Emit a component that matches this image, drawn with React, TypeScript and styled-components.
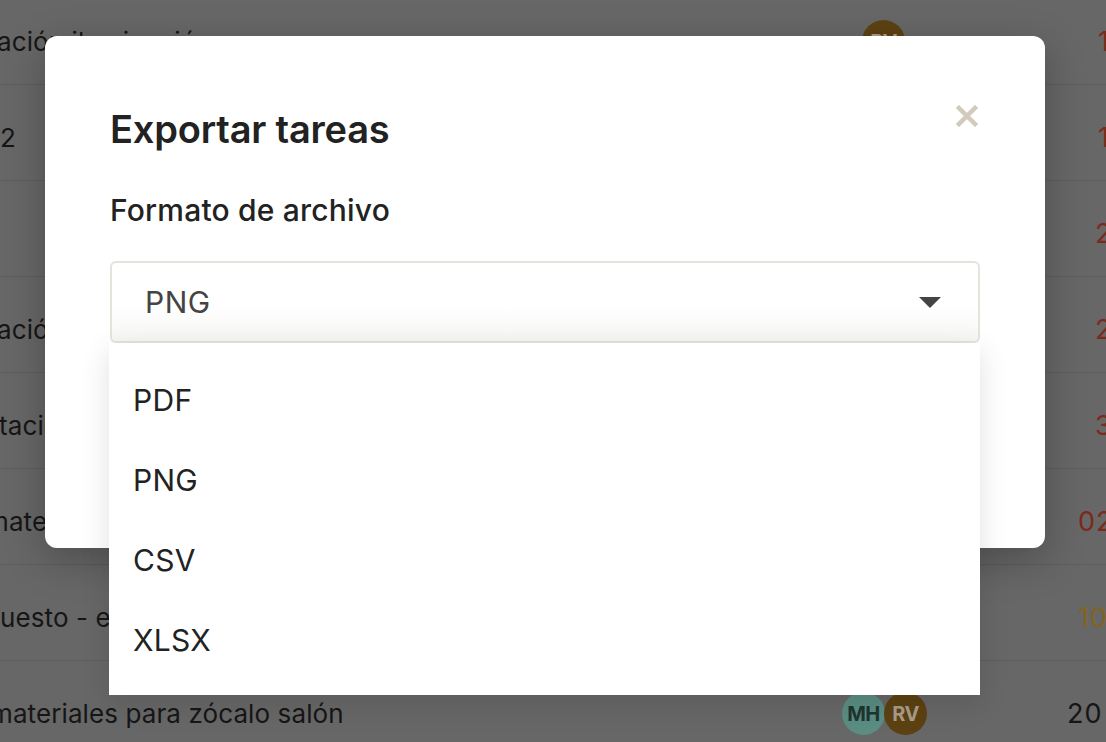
import { FC } from 'react';
import styled, { createGlobalStyle } from 'styled-components';

const GlobalStyle = createGlobalStyle`
  html, body {
    margin: 0;
    padding: 0;
  }
  body {
    font-family: Inter, 'Open Sans', sans-serif;
    background: #676767;
  }
`;

type Tone = 'red' | 'gold' | 'dark';

interface IRow {
  text: string;
  shift: number;
  date: string;
  dateX: number;
  tone: Tone;
  avatars?: { initials: string; kind: 'teal' | 'brown' }[];
  avatarX?: number;
}

const rows: IRow[] = [
  { text: 'ación iluminación', shift: -3, date: '12 jun', dateX: 1098, tone: 'red', avatars: [{ initials: 'RV', kind: 'brown' }], avatarX: 20 },
  { text: '2', shift: 0, date: '14 jun', dateX: 1098, tone: 'red' },
  { text: '', shift: 0, date: '21 jun', dateX: 1095, tone: 'red' },
  { text: 'ación', shift: -3, date: '25 jun', dateX: 1095, tone: 'red' },
  { text: 'tación', shift: -1, date: '30 jun', dateX: 1095, tone: 'red' },
  { text: 'materiales', shift: -14, date: '02 jul', dateX: 1078, tone: 'red' },
  { text: 'uesto - eléctrico', shift: 0, date: '10 jul', dateX: 1078, tone: 'gold' },
  {
    text: 'materiales para zócalo salón',
    shift: -10,
    date: '20 jul',
    dateX: 1067,
    tone: 'dark',
    avatars: [
      { initials: 'MH', kind: 'teal' },
      { initials: 'RV', kind: 'brown' },
    ],
    avatarX: 0,
  },
];

const formats = ['PDF', 'PNG', 'CSV', 'XLSX'];

const Page = styled.div`
  position: relative;
  width: 1106px;
  height: 742px;
  overflow: hidden;
  background: #676767;
`;

const Table = styled.div`
  margin-top: -11px;
`;

const Row = styled.div`
  display: grid;
  grid-template-columns: 842px 200px 1fr;
  align-items: center;
  height: 85px;
  padding-top: 10px;
  border-bottom: 1px solid #5d5d5d;
  font-size: 26px;
  color: #161616;
  white-space: nowrap;
`;

const TaskText = styled.div<{ $shift: number }>`
  margin-left: ${(p) => p.$shift}px;
  overflow: hidden;
  letter-spacing: 0.1px;
`;

const Avatars = styled.div<{ $x: number }>`
  display: flex;
  padding-left: ${(p) => p.$x}px;
`;

const Avatar = styled.div<{ $kind: 'teal' | 'brown' }>`
  width: 43px;
  height: 43px;
  border-radius: 50%;
  margin-right: -1px;
  display: flex;
  align-items: center;
  justify-content: center;
  font-size: 20px;
  font-weight: 700;
  letter-spacing: -0.5px;
  background: ${(p) => (p.$kind === 'teal' ? '#5b8d82' : '#5c4112')};
  color: ${(p) => (p.$kind === 'teal' ? '#1e3530' : '#a99d88')};
`;

const toneColor: Record<Tone, string> = {
  red: '#7c2a1c',
  gold: '#84631f',
  dark: '#161616',
};

const DateCell = styled.div<{ $x: number; $tone: Tone }>`
  padding-left: ${(p) => p.$x - 1042}px;
  color: ${(p) => toneColor[p.$tone]};
  font-size: 27px;
  letter-spacing: 1px;
`;

const Modal = styled.div`
  position: absolute;
  left: 45px;
  top: 36px;
  width: 1000px;
  height: 512px;
  box-sizing: border-box;
  padding: 69px 65px 0;
  background: #fff;
  border-radius: 12px;
  box-shadow: 0 12px 40px rgba(0, 0, 0, 0.25);
  font-family: Inter, 'Open Sans', sans-serif;
`;

const Title = styled.h2`
  margin: 0 0 38px;
  font-size: 38px;
  line-height: 48px;
  font-weight: 600;
  color: #222;
  letter-spacing: -0.2px;
`;

const CloseButton = styled.button`
  position: absolute;
  top: 68px;
  right: 66px;
  width: 24px;
  height: 24px;
  padding: 0;
  border: none;
  background: none;
  cursor: pointer;
  display: flex;
  align-items: center;
  justify-content: center;
`;

const Label = styled.div`
  font-size: 30px;
  line-height: 38px;
  font-weight: 500;
  letter-spacing: 0.2px;
  color: #222;
  margin-bottom: 32px;
`;

const SelectWrap = styled.div`
  position: relative;
  width: 870px;
`;

const SelectBox = styled.div`
  height: 82px;
  box-sizing: border-box;
  display: flex;
  align-items: center;
  justify-content: space-between;
  padding: 0 37px 0 33px;
  border: 2px solid #e5e3dc;
  border-radius: 6px;
  background: linear-gradient(#fff 55%, #f6f6f4);
  font-size: 30px;
  letter-spacing: 0.5px;
  color: #444;
`;

const Caret = styled.span`
  width: 0;
  height: 0;
  border-left: 11px solid transparent;
  border-right: 11px solid transparent;
  border-top: 11px solid #444;
`;

const Menu = styled.ul`
  position: absolute;
  left: -1px;
  top: 100%;
  width: 871px;
  height: 352px;
  box-sizing: border-box;
  margin: 0;
  padding: 17px 0 0;
  list-style: none;
  background: #fff;
  box-shadow: 0 8px 28px rgba(0, 0, 0, 0.12);
  z-index: 2;
`;

const MenuItem = styled.li`
  height: 80px;
  display: flex;
  align-items: center;
  padding-left: 24px;
  font-size: 30px;
  letter-spacing: 0.3px;
  color: #222;
`;

const App: FC = () => (
  <Page>
    <GlobalStyle />
    <Table>
      {rows.map((row, i) => (
        <Row key={i}>
          <TaskText $shift={row.shift}>{row.text}</TaskText>
          <Avatars $x={row.avatarX ?? 0}>
            {row.avatars?.map((a) => (
              <Avatar key={a.initials} $kind={a.kind}>
                {a.initials}
              </Avatar>
            ))}
          </Avatars>
          <DateCell $x={row.dateX} $tone={row.tone}>
            {row.date}
          </DateCell>
        </Row>
      ))}
    </Table>
    <Modal>
      <CloseButton aria-label="Cerrar">
        <svg width="22" height="22" viewBox="0 0 22 22">
          <path d="M3 3L19 19M19 3L3 19" stroke="#d2cbbd" strokeWidth="4.5" strokeLinecap="square" />
        </svg>
      </CloseButton>
      <Title>Exportar tareas</Title>
      <Label>Formato de archivo</Label>
      <SelectWrap>
        <SelectBox>
          <span>PNG</span>
          <Caret />
        </SelectBox>
        <Menu>
          {formats.map((f) => (
            <MenuItem key={f}>{f}</MenuItem>
          ))}
        </Menu>
      </SelectWrap>
    </Modal>
  </Page>
);

export default App;
